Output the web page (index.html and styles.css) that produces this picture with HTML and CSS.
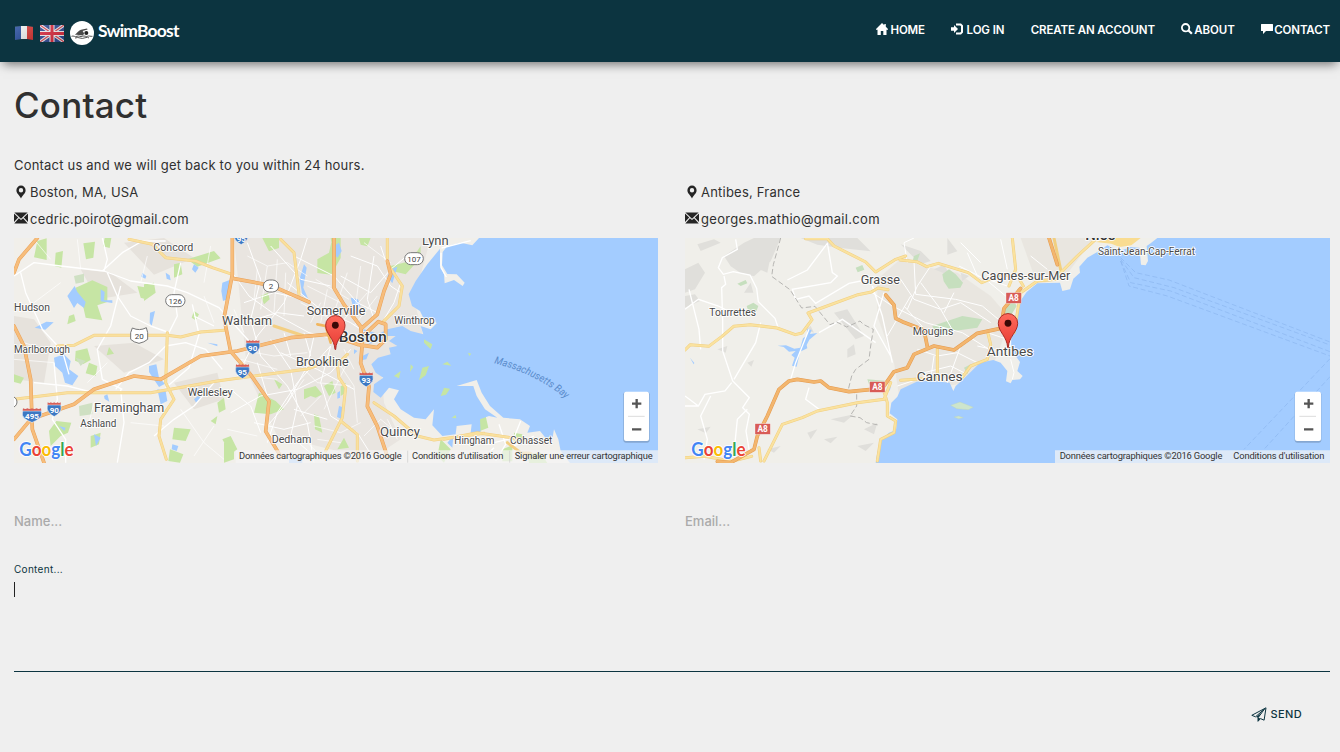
FILE: index.html
```html
<!DOCTYPE html>
<html lang="en">
<head>
<meta charset="utf-8">
<title>SwimBoost - Contact</title>
<link rel="stylesheet" href="styles.css">
</head>
<body>
<svg class="defs" width="0" height="0">
  <defs>
    <linearGradient id="pinfill" x1="0" y1="0" x2="0" y2="1"><stop offset="0" stop-color="#ff6a5c"/><stop offset="1" stop-color="#e63b33"/></linearGradient>
    <linearGradient id="shine" x1="0" y1="0" x2="1" y2="1"><stop offset="0" stop-color="#fff" stop-opacity=".15"/><stop offset="1" stop-color="#000" stop-opacity=".15"/></linearGradient>
    <symbol id="pin" viewBox="0 0 64 108" overflow="visible"><path d="M31 106C29 72 2 58 2 31a30 30 0 0 1 60 0C62 58 34 72 33 106z" fill="url(#pinfill)" stroke="#a52a24" stroke-width="3"/><circle cx="32" cy="31" r="10.500" fill="#3a0906"/></symbol>
    <symbol id="marker" viewBox="0 0 14 14"><path fill-rule="evenodd" d="M7 .6A4.600 4.600 0 0 0 2.400 5.200C2.400 8.500 5.500 10 7 13.500 8.500 10 11.600 8.500 11.600 5.200A4.600 4.600 0 0 0 7 .6zm0 2.400a2.200 2.200 0 1 1 0 4.400 2.200 2.200 0 0 1 0-4.400z"/></symbol>
    <symbol id="mail" viewBox="0 0 14 12"><path d="M.4.500h13.200L7 6.800zM0 1.500l4.200 4L0 10zM14 1.500l-4.200 4L14 10zM4.900 6.200 7 8.100l2.100-1.900 4.600 5.300H.300z"/></symbol>
    <symbol id="shield" viewBox="0 0 60 60" preserveAspectRatio="none" overflow="visible"><path d="M2 12Q-3 30 8 42 18 52 30 58 42 52 52 42 63 30 58 12z" fill="#3c78c3" stroke="#fff" stroke-width="2"/><path d="M3 1q7 5 13 0 7 5 14 0 7 5 14 0 6 5 13 0l1 10H2z" fill="#d65f59"/></symbol>
    <g id="google" font-family="Lato,sans-serif" font-size="55" font-weight="700" stroke="#fff" stroke-width="5" paint-order="stroke"><text textLength="163" lengthAdjust="spacingAndGlyphs"><tspan fill="#4285f4">G</tspan><tspan fill="#ea4335">o</tspan><tspan fill="#fbbc05">o</tspan><tspan fill="#4285f4">g</tspan><tspan fill="#34a853">l</tspan><tspan fill="#ea4335">e</tspan></text></g>
  </defs>
</svg>

<header class="navbar">
  <div class="brand">
    <svg class="flag-fr" viewBox="0 0 18 14"><path fill="#2a50a0" d="M0 1l6-1v13l-6 1z"/><path fill="#f5f5f5" d="M6 0h6v13H6z"/><path fill="#dd3c3a" d="M12 0l6 1v13l-6-1z"/><path fill="url(#shine)" d="M0 0h18v14H0z"/></svg>
    <svg class="flag-uk" viewBox="0 0 24 17"><path fill="#2c4690" d="M0 0h24v17H0z"/><path stroke="#eee" stroke-width="3.200" d="M0 0l24 17M24 0L0 17"/><path stroke="#d44350" stroke-width="1.200" d="M0 0l24 17M24 0L0 17"/><path stroke="#f3eeee" stroke-width="5" d="M12 0v17M0 8.500h24"/><path stroke="#d8293c" stroke-width="3" d="M12 0v17M0 8.500h24"/><path fill="url(#shine)" d="M0 0h24v17H0z"/></svg>
    <svg class="logo" viewBox="0 0 24 24"><circle cx="12" cy="12" r="12" fill="#fff"/><path d="M5 13.800c2-2 4-4.500 6-5l6-1.300.6 1-5 1.500 1.500 2.200-1 2.300c-3-.5-5.500-.2-8.100-.7z" fill="#4a4a4a"/><circle cx="16.300" cy="12" r="2" fill="#222"/><path d="M1.500 15.300c2-1 3.500 1 5.500 0s3.500 1 5.500 0 3.500.8 5 0 3 .3 5 0M5 17q3-1 5 0t5-.2 4 .2" fill="none" stroke="#555" stroke-width="1"/></svg>
    <span class="brand-name">SwimBoost</span>
  </div>
  <nav class="menu">
    <a class="home"><svg viewBox="0 0 12 12"><path d="M6 0l2.300 2.300V1h1.500v2.800L12 6.100v.6h-1.500V12H7.300V8H4.800v4H1.500V6.700H0v-.6z"/></svg><span>HOME</span></a>
    <a class="login"><svg viewBox="0 0 12 12"><path d="M0 4.200h3V2l4 4-4 4V7.800H0zM5 .6h5L12 2.500v7L10 11.400H5V9.600h4.200l.8-.8V3.200l-.8-.8H5z"/></svg><span>LOG IN</span></a>
    <a class="create"><span>CREATE AN ACCOUNT</span></a>
    <a class="about"><svg viewBox="0 0 12 12"><circle cx="4.600" cy="4.700" r="3.700" fill="none" stroke="#fff" stroke-width="1.800"/><path d="M7.300 7.300l3.600 3.500" stroke="#fff" stroke-width="2.300"/></svg><span>ABOUT</span></a>
    <a class="contact"><svg viewBox="0 0 12 12"><path d="M.5 1h11q.5 0 .5.500v6q0 .5-.5.500H5l-3 3V8H.5Q0 8 0 7.500v-6Q0 1 .5 1z"/></svg><span>CONTACT</span></a>
  </nav>
</header>

<main class="page">
  <h1><span>Contact</span></h1>
  <p class="intro"><span>Contact us and we will get back to you within 24 hours.</span></p>
  <div class="columns">
    <section>
      <p class="line"><svg><use href="#marker"/></svg><span>Boston, MA, USA</span></p>
      <p class="line"><svg class="mail"><use href="#mail"/></svg><span>cedric.poirot@gmail.com</span></p>
      <svg class="map" viewBox="0 6 1932 675" preserveAspectRatio="none">
        <rect y="6" width="1932" height="675" fill="#f1efea"/>
        <g fill="#e6e2dc"><path d="M0 240l60 10 50 70-20 120-90-10zM200 100l90 10 80 60-120 20zM240 330l120-10 90 50-120 40zM330 20l120-14 90 60-120 50zM480 440l130-30 20 80-90 30z"/><path d="M660 6h590L1200 190l30 120-130 70 10 120 50 110-90 60-160-40-120-30-90-190z" opacity=".75"/></g>
        <g fill="#c6e5a4"><path d="M70 15l28-8v65l-38-8zM125 50l22-5-5 50-20-5zM208 22l35-5-5 48-22 5zM272 6h20l-5 30-20-5zM185 155l50-22 45 20v45l-30 10 15 45-50-8-10-45-22-30zM370 150l30 5-5 35-15-5zM390 145l30-5 5 30-35 25zM480 85l20-5 5 35-25 10zM520 70l80-25 20 22-70 25zM540 225l15 10-10 18-12-8zM185 345l35-8 10 35-22 12-25-10zM225 380l25 10-5 30-30-8zM285 333l15 20-22 5zM0 415l30 10-10 18-20-5zM165 240l15-5 5 20-25 10zM105 585l22-30 45 5-10 30-22 10-30 30zM230 600l30-10-5 35-25 10zM480 575l50 5-15 35-40-5zM468 640l40 15-10 25-35-5zM610 500l20-15 5 35-20 10zM625 610l25-10 20 40-20 15zM590 555l20-15-5 25z"/><path d="M745 6h50v30l-30 10zM910 70l35-20 10-44h25v60l-28 50-42-5zM950 6h20l-15 30zM740 180l22-10 5 20-17 15zM1130 90l60-15 30-45v35l-45 50-40-10zM735 470l50 25 25 25-40 15-50-5zM780 430l25 15-10 15zM870 460l35-10 20 25-20 10-15-5-20 10zM930 450l25-15 10 35-20 10zM970 640l20-35 15 30zM630 620l30 5v45l-30 10zM900 535l15 5 10 50-22-10zM980 450l15-10v30l-15 10zM1035 6h35l-10 25-20-5z"/><path d="M1395 530l20 10 8 35-25 10-12-40zM1465 640l30-12v48h-30zM1540 655l40-5 20 31h-55zM1500 590l25 5v20h-25zM1280 610l30 30-20 40-20-20z"/></g>
        <g fill="#cfe0c3"><path d="M180 120l30-7v25l-25 5zM195 510l40-10v35l-38 5zM185 365l30 10-15 15z"/></g>
        <path fill="#a3ccff" d="M1395 6L1375 28 1340 20 1300 30 1286 48 1284 88 1300 114 1328 115 1352 140 1346 150 1320 132 1292 142 1290 115 1278 88V38L1240 85 1205 135 1184 175 1194 210 1218 225 1230 250 1255 245 1268 262 1250 280 1220 270 1228 295 1190 285 1165 270 1120 280 1110 300 1145 300 1125 315 1150 330 1125 335 1130 355 1092 365 1072 385 1085 410 1108 425 1080 445 1078 468 1100 485 1125 455 1155 463 1140 490 1160 520 1200 545 1235 550 1260 520 1255 568 1285 600 1325 595 1328 570 1373 565 1370 590 1400 595 1398 550 1425 540 1450 545 1413 520 1388 480 1378 450 1328 450 1388 432 1403 470 1428 510 1468 545 1518 550 1548 570 1540 590 1578 585 1598 610 1613 620 1620 580 1633 610 1640 645 1668 681H1932V6z"/>
        <g fill="#a3ccff"><path d="M160 180l22-30 8 18 25 30-5 18-20-15-10 15zM260 160l12 8-2 25h25v8l-35-5zM62 275l35-18 22 2-25 22zM120 365l30-10 20 20-5 25 28 20-18 28-22-8-8-30-22-20zM405 390l22-5 8 40 18 18-18 10-30-45zM430 460l25 5 5 30-20 10zM455 110l12 8 3 15-12-5zM385 110l12 10-3 8-12-6zM540 85l14 10-10 15-10-10zM625 140l22-8v55l-20 8-5-30zM408 230l15-5-10 45-6-10zM580 320l30 5v6zM540 490l14-12 8 8-15 15zM270 480l10-5 6 22-14-8zM475 625l18 5-5 15-15-5zM240 595l20 10-14 25zM135 570l20 5-4 10z"/><path d="M960 30l15-10 8 25-12 20-13-12zM870 85l8 10-10 60 15 35-18-12-8-50zM1010 185l22 5 8 22-25-8zM1130 100l20-8-15 50-15-20zM1050 280l32 10-15 18 45-24-5 25-40 15-35-30zM1045 360l20-10-8 20-15 3zM975 510l10 3-4 35-12-5zM630 155l12 20-4 20-8-5zM1020 340l10 5-10 10zM970 470l8-5v20l-8 3zM825 670l40-7v18h-40zM1300 620l18-20-3 35z"/></g>
        <g fill="#c6e5a4"><path d="M1230 310l25 15-5 15-20-20zM1190 385l8 8-10 15zM1225 395l20-5-10 28-20 15zM1140 420l20-15-5 22zM1280 480l10-25 18 3-12 18zM1285 385l15-8 12 12zM1362 350l10 3-6 7zM1313 545l12-8 2 10z"/></g>
        <g fill="none" stroke="#fff" stroke-width="4" stroke-linejoin="round">
          <path d="M0 120l60-40 80 10 130 15 80 30 110 15 60 20 95 45 90 100M270 105l10-35-15-65M265 105l60-55 60-35h70M280 110l30 70 40 60 60 30 50 18M20 110l15 60 50 110 60 65 20 70M60 440l100 10 80 20M320 150l-30 120-40 70 15 90 60 30M120 380l10 110-15 60 40 60v70M305 460l40-50 60-30 50-50 60-10 60 20 50 60M455 455l70-60 30-100-20-90M500 80l-20 90 10 70-25 50M540 240l60 30M420 600l60-50 60-40 60-70M320 460l10 100-20 120"/>
          <path stroke-width="3" d="M655 110l50 70 70 50 110 60 80 20M670 420l60-120 80-100 50-130 20-64M700 20l40 110-30 120 30 110 80 90 60 110 20 120M650 530l90-50 110-20 100-50 60-70M760 620l30-90 60-90 100-110M820 140l100 80 90 40 60 40M840 60l120 60 70 80 60 30M980 120l90 50 60-70 60-50M770 310l60 90 20 110-20 90 70 60M900 300l-20 90-60 110-60 70M950 330l-30 110 30 100 80 50 50 80M1010 60l80 30 40 60 30 20M1160 140l-20 60-30 50M1080 60l-20 130 20 60M770 30l90 100 90 20M1100 30l30 90M690 200l90-30 90 20M690 260l100-30 80 10M800 350l110 50 110 60M650 460l60 50 30 80M720 560l90 20 80-20M840 520l100 30M810 290l20 70M870 290l20 70M730 380l30 100"/>
          <path stroke-width="2" d="M700 60l60 30 60-10 60 40M730 100l-10 90M760 90l-20 130M790 70l-10 160M815 110l-5 130M660 220l30 70M920 200l-30 60M940 160l-20 100M1000 110l-40 120M1040 90l-20 160M860 200l110 60M880 150l120 60M905 130l100 60M990 250l70-80M1020 270l70-90M1050 20l80 60M670 340l110 20 100-10M680 370l110 30M850 380l60 60 100 10M870 430l-50 70M920 480l-60 60M1000 380l-70 140M960 360l60 90 10 110M990 340l30 60M900 570l80 20 60-30M910 610l70 10M1050 600l50-50 60 50M1120 550l30 60M880 620l40 40M700 420l90 10M640 580l90 20M30 320l90 30M0 370l120 10M60 200l80-60M220 440l60-60M60 10l50 60M190 10l10 90M400 60l-20 80M590 30l-20 110M570 180l30 80M350 560l100 10M500 520l70 100 60 50M540 660l60-90M240 500l-20 80"/>
          <path d="M1455 565l20 60-30 50M1520 555l-20 50-80 20M1440 635l-30 30M1560 600l-60 30M1283 36l87-22M1281 50v45l16 28"/>
        </g>
        <g fill="none" stroke-linejoin="round" stroke-linecap="round">
          <path stroke="#f3cf83" stroke-width="9" d="M130 330l50-2 60-30h220l40 5 60-15 70-5M345 10l70 15 40 40 90 10 50 20 60 20M460 290l-5 150 25 50-40 60-5 50 22 70M0 490l160-20h250l200-35 270-36 70-25M800 10l40 40 10 80 5 45M1120 6v60M1125 90l40 60-10 60-50 50M1000 355l-30 30 5 40 20 30-10 90-50 100M980 555l50 40v80M1080 500l60 40 70 60 50 12 150-20M1290 610l100-20 200 30M780 270l90 30M1480 620l40 30 30 2"/>
          <path stroke="#f9e09e" stroke-width="6" d="M130 330l50-2 60-30h220l40 5 60-15 70-5M345 10l70 15 40 40 90 10 50 20 60 20M460 290l-5 150 25 50-40 60-5 50 22 70M0 490l160-20h250l200-35 270-36 70-25M800 10l40 40 10 80 5 45M1120 6v60M1125 90l40 60-10 60-50 50M1000 355l-30 30 5 40 20 30-10 90-50 100M980 555l50 40v80M1080 500l60 40 70 60 50 12 150-20M1290 610l100-20 200 30"/>
          <path stroke="#e8a15a" stroke-width="11" d="M70 6L15 70 0 110M0 270l30 60 20 100 5 150 35 100M0 610l50-60 130-45 60-45 120-40 80 10 120-70 110-15 160-40 110-10 90 30 60 10 25-25V265l-22-8-48 45M655 6v110l-25 130 20 100 60 70 55 80-10 90 45 75M660 128l110 20 115 50M960 6v150l30 50 50 65 5 50-5 60 25 70-5 60 30 60 30 90M1120 75l10 40-20 50-20 70-45 40"/>
          <path stroke="#f7bd7b" stroke-width="8" d="M70 6L15 70 0 110M0 270l30 60 20 100 5 150 35 100M0 610l50-60 130-45 60-45 120-40 80 10 120-70 110-15 160-40 110-10 90 30 60 10 25-25V265l-22-8-48 45M655 6v110l-25 130 20 100 60 70 55 80-10 90 45 75M660 128l110 20 115 50M960 6v150l30 50 50 65 5 50-5 60 25 70-5 60 30 60 30 90M1120 75l10 40-20 50-20 70-45 40"/>
          <path stroke="#f1b65f" stroke-width="8" d="M910 265l25 5 15 50"/>
        </g>
        <g class="place">
          <text x="418" y="45" textLength="120" lengthAdjust="spacingAndGlyphs">Concord</text><text x="0" y="226" textLength="108" lengthAdjust="spacingAndGlyphs">Hudson</text><text x="0" y="351" textLength="168" lengthAdjust="spacingAndGlyphs">Marlborough</text>
          <text x="240" y="528" textLength="211" lengthAdjust="spacingAndGlyphs" class="big">Framingham</text><text x="199" y="573" textLength="108" lengthAdjust="spacingAndGlyphs">Ashland</text><text x="521" y="479" textLength="135" lengthAdjust="spacingAndGlyphs">Wellesley</text>
          <text x="624" y="266" textLength="150" lengthAdjust="spacingAndGlyphs" class="big">Waltham</text><text x="878" y="238" textLength="176" lengthAdjust="spacingAndGlyphs" class="big">Somerville</text><text x="846" y="389" textLength="158" lengthAdjust="spacingAndGlyphs" class="big">Brookline</text>
          <text x="974" y="317" textLength="144" lengthAdjust="spacingAndGlyphs" class="city">Boston</text><text x="1141" y="264" textLength="121" lengthAdjust="spacingAndGlyphs">Winthrop</text><text x="773" y="620" textLength="119" lengthAdjust="spacingAndGlyphs">Dedham</text><text x="1098" y="600" textLength="120" lengthAdjust="spacingAndGlyphs" class="big">Quincy</text><text x="1224" y="27" textLength="80" lengthAdjust="spacingAndGlyphs" class="big">Lynn</text><text x="1321" y="625" textLength="120" lengthAdjust="spacingAndGlyphs">Hingham</text><text x="1488" y="625" textLength="127" lengthAdjust="spacingAndGlyphs">Cohasset</text>
        </g>
        <g class="badge">
          <rect x="455" y="176" width="58" height="36" rx="18"/><text x="484" y="203">126</text><rect x="748" y="132" width="46" height="36" rx="18"/><text x="771" y="159">2</text><rect x="1172" y="50" width="56" height="36" rx="18"/><text x="1200" y="77">107</text>
          <path d="M355 276q22 10 42-1l4 15v20q-10 9-26 12-16-3-25-12v-20z"/><text x="376" y="308">20</text><circle cx="-8" cy="498" r="17"/>
        </g>
        <g class="shield"><use href="#shield" x="24" y="516" width="60" height="45"/><text x="54" y="550">495</text><use href="#shield" x="99" y="498" width="43" height="45"/><text x="121" y="531">90</text><use href="#shield" x="695" y="312" width="43" height="45"/><text x="716" y="345">90</text><use href="#shield" x="664" y="384" width="43" height="45"/><text x="685" y="417">95</text><use href="#shield" x="1035" y="409" width="43" height="45"/><text x="1056" y="442">93</text><use href="#shield" x="660" y="-18" width="43" height="45"/><text x="682" y="19">95</text></g>
        <path id="bay" d="M1440 382Q1570 414 1662 494" fill="none"/><text class="bay"><textPath href="#bay" textLength="242" lengthAdjust="spacingAndGlyphs">Massachusetts Bay</textPath></text>
        <use href="#pin" x="933" y="237" width="62" height="106"/>
        <use href="#google" x="16" y="661"/>
        <path d="M665 643h1267v38H665z" fill="#f5f5f5" opacity=".7"/><path d="M1181 644v36M1487 644v36" stroke="#ccc" stroke-width="2"/>
        <g class="credit"><text x="675" y="668" textLength="488">Données cartographiques ©2016 Google</text><text x="1194" y="668" textLength="274">Conditions d'utilisation</text><text x="1502" y="668" textLength="414">Signaler une erreur cartographique</text></g>
        <g class="zoomer"><rect class="halo" x="1828" y="468" width="79" height="152" rx="7"/><rect x="1830" y="467" width="75" height="148" rx="6"/><path class="rule" d="M1842 541h50"/><path d="M1854 503h28M1868 489v28M1854 580h28"/></g>
      </svg>
    </section>
    <section>
      <p class="line"><svg><use href="#marker"/></svg><span>Antibes, France</span></p>
      <p class="line"><svg class="mail"><use href="#mail"/></svg><span class="mail-b">georges.mathio@gmail.com</span></p>
      <svg class="map" viewBox="3 6 1935 675" preserveAspectRatio="none">
        <rect width="1940" height="690" fill="#f0efea"/>
        <g fill="#e7e3dd"><path d="M580 130l80-70 50 30 110 20 100 70 60 70-50 130-120 60-100 10-60 60-20-130-50-140zM660 450l60-50 110-20 60 20-40 40-60 10-90 10zM1010 6h220l-90 120-80 20z" opacity=".8"/></g>
        <g fill="#e0dfdb"><path d="M3 100l40-20 20 30-30 50-30 10zM40 25l50-15 20 10-60 25zM120 60l60-40 30-14h80l-30 70-50 45-40-10-30-20zM200 90l60-30-10 50zM350 6h170l40 40-90-10-70-10zM3 180l30-5 15 20-45 20zM180 170l20-30 8 30zM370 590l30-10-20 30zM440 550l70-15-30 25zM540 580l40-20-10 35zM450 230l40-10 50 80-25 10zM490 340l20-15 5 30-25 10zM40 580l40-8-15 20zM100 340l30-10-5 20zM250 640l40-10-20 20zM520 630l50-10-25 25zM420 610l40-8-20 20zM190 380l20-8-8 20zM360 280l20-10 10 20z"/><path d="M650 25l60 20 30 30-30 10zM750 100l30-14 20 34zM790 6l30 40-30 10zM830 110l25 10-20 15z"/></g>
        <g fill="#c6dfbe"><path d="M160 143l25-11 5 10-20 8zM188 210l20-10 15 10-6 16-22 5zM515 95l20-8 6 14-20 8zM690 60l18-8-10 28-12-5zM775 115l20-15 20 15 22 25-8 15-35 3-15-22zM745 270l90-30 60 10-15 25-70 10-50 20zM960 215l30-20 8 15-15 25-20 5zM550 430l60 5-15 20-40-10zM840 395l20-10-10 30z"/></g>
        <path fill="#a3ccff" d="M1420 6L1400 22 1388 30 1392 75 1385 88 1371 86 1366 35 1340 33 1308 45 1270 28 1240 48 1210 65 1186 92 1188 110 1168 128 1158 160 1135 165 1128 140 1060 142 1028 168 1005 200 995 240 986 290 978 325 988 350 1008 378 1000 405 1016 420 1008 430 985 432 980 442 966 436 970 405 950 380 928 372 888 380 860 408 835 433 815 450 808 465 797 440 740 434 698 437 650 460 L640 482 622 500 617 532 640 550 636 582 615 590 592 612 580 650 575 681H1938V6z"/>
        <path fill="#cde5cc" stroke="#bcd0b6" stroke-width="1" d="M800 508l28-10 40 16-15 7-35-3zM810 543l14-3 14 5-14 3z"/>
        <path fill="#a3ccff" d="M370 278l13 4-5 12 22-3-24 20-8 16 2 10-22 10-10 45-14-3 8-24-10-8 13-12-20 2-16-14-18-4 25-1 25 10 18-3 8-28 12-8zM18 365l13 16-2 4zM609 453l12-3-4 15z"/>
        <g fill="none" stroke="#fff" stroke-width="4"><path d="M155 10l5 30-45 25-12 30 15 20 30-8 50 10 20 40 5 40 50 50 10 30M120 120l5 25-12 10 3 100v90l30 90 50 50-20 30 20 20-10 50 10 60M3 220l40-30 60 20 30 15 80 10M15 160l30 120 5 60M430 20l15 90 15 10-20 20-115 20 10 30 40-10 20 22 100-60 50-10M430 22l-60 80-60 30M565 150l30 90 30 140M600 170l-30 100 50 90M230 260l-15 60-65 110M375 280l-40 100-15 50M375 455l-10 35 40 30M3 510h40l20-35 60-10 20-25M80 480l-30 60 20 70-10 60M190 520l-30 30-10 100M3 480l40 30M405 290l70-40 100 70"/><path stroke-width="3" d="M565 170l60 40 100 50 110 30 80 50M650 130l40 60 80 30 40 70M690 75l5 100 120 15 80 20 60 50M710 140l60 80 60-20 90 60M660 210l80 90 60-5M740 90l-40 60-30 70M825 90l80 40 60 50M850 50l30 70 60 20 30 10M670 80l-10-60 30-14M830 20l60 60M950 10l20 90M1040 60l50 40M700 340l60 20 60-10 60 30M720 410l80-20 40 20M750 360l-10 70M830 330l-40 110M640 450l90-30 50 10 40-10M950 240l30 60 0 40M910 290l60 20M880 330l90 20M980 370l10 40-5 20M680 180l-70 120M810 170l-30 60"/></g>
        <path d="M290 6l-22 80-5 35 55 40 35 55 40-5 45 55 20-8 30 15 40-18 10 10 30 15-8 50-5 40-40 30-12 20-10 40 25 15 0 35-20 30 30 5 20 15 40 8" fill="none" stroke="#b6b5b2" stroke-width="3" stroke-dasharray="16 8"/>
        <g fill="none" stroke-linejoin="round" stroke-linecap="round">
          <path stroke="#f1cf80" stroke-width="9" d="M365 8h65l20 22 95 48 30 30 60-38 30-10M3 342l16-16 55 5 40-30 35-30 50-5 80 10 55 20 20-5 30-40-12-20 150-55 40-8 20-12 30 5M648 72l50 5 30 15 35-10 90 28 40 30 60-25 50 10 15 25M975 150l20-50-10-94M1110 6l20 95M990 290l10-60 10-60 50-35 60-5M910 285l10 40-10 45-50 20-30 40M620 440l-20 50-80 10-120 25-45 20-60 20-30 60-25 50M595 450l15 50 0 40 25 15-5 35-40 20-10 65M760 340v85l-110 8M225 635l5 40M3 665l60-4 80 15 60-15M1120 120l60-60 55-50"/>
          <path stroke="#fae29f" stroke-width="6" d="M365 8h65l20 22 95 48 30 30 60-38 30-10M3 342l16-16 55 5 40-30 35-30 50-5 80 10 55 20 20-5 30-40-12-20 150-55 40-8 20-12 30 5M648 72l50 5 30 15 35-10 90 28 40 30 60-25 50 10 15 25M975 150l20-50-10-94M990 290l10-60 10-60 50-35 60-5M910 285l10 40-10 45-50 20-30 40M620 440l-20 50-80 10-120 25-45 20-60 20-30 60-25 50M595 450l15 50 0 40 25 15-5 35-40 20-10 65M760 340v85l-110 8M225 635l5 40M3 665l60-4 80 15 60-15M1120 120l60-60 55-50"/>
          <path stroke="#e49b50" stroke-width="11" d="M100 676l40 4 70-40 10-40 30-60 35-80 30-25 25-5 50 8 20-3 25 20 60 12 100-10 35-50 40-12 20-40 60-25 60 12 70-50 70-15 10-60 50-60M605 177l25 30 5 40 20 10 65 25 10 50M1095 6l25 80"/>
          <path stroke="#f3b66e" stroke-width="8" d="M100 676l40 4 70-40 10-40 30-60 35-80 30-25 25-5 50 8 20-3 25 20 60 12 100-10 35-50 40-12 20-40 60-25 60 12 70-50 70-15 10-60 50-60M605 177l25 30 5 40 20 10 65 25 10 50M1095 6l25 80"/>
        </g>
        <path fill="none" stroke="#8bb5ee" stroke-width="2" stroke-dasharray="15 8" d="M1310 65l45 45 100 22 483 186M1310 70l40 55 120 30 468 172M1310 75l30 65 120 25 478 182M1310 75l25 75 115 30 488 180M1938 368L1680 640M1938 422L1740 640"/>
        <g fill="#f9dc91"><path d="M1235 18l45-12 90 0-28 22-35 5-25-10z"/></g>
        <g class="place">
          <text x="530" y="143" textLength="118" lengthAdjust="spacingAndGlyphs" class="big">Grasse</text><text x="76" y="240" textLength="140" lengthAdjust="spacingAndGlyphs">Tourrettes</text><text x="892" y="131" textLength="267" lengthAdjust="spacingAndGlyphs" class="big">Cagnes-sur-Mer</text><text x="1242" y="58" textLength="291" lengthAdjust="spacingAndGlyphs">Saint-Jean-Cap-Ferrat</text><text x="686" y="296" textLength="122" lengthAdjust="spacingAndGlyphs">Mougins</text><text x="908" y="360" textLength="140" lengthAdjust="spacingAndGlyphs" class="big">Antibes</text><text x="698" y="434" textLength="138" lengthAdjust="spacingAndGlyphs" class="big">Cannes</text><text x="1204" y="12" textLength="90" lengthAdjust="spacingAndGlyphs" class="city">Nice</text>
        </g>
        <g class="autoroute"><rect x="557" y="437" width="46" height="32"/><text x="580" y="462">A8</text><rect x="213" y="563" width="46" height="32"/><text x="236" y="588">A8</text><rect x="966" y="170" width="46" height="32"/><text x="989" y="195">A8</text></g>
        <use href="#pin" x="941" y="231" width="62" height="106"/>
        <use href="#google" x="22" y="661"/>
        <path d="M1113 643h825v38h-825z" fill="#f5f5f5" opacity=".7"/>
        <g class="credit"><text x="1127" y="668" textLength="488">Données cartographiques ©2016 Google</text><text x="1648" y="668" textLength="273">Conditions d'utilisation</text></g>
        <g class="zoomer"><rect class="halo" x="1832" y="468" width="80" height="152" rx="7"/><rect x="1833" y="467" width="78" height="148" rx="6"/><path class="rule" d="M1846 541h50"/><path d="M1860 503h28M1874 489v28M1860 580h28"/></g>
      </svg>
    </section>
  </div>
  <form>
    <div class="columns fields"><label>Name...</label><label>Email...</label></div>
    <label class="content-label"><span>Content...</span></label>
    <div class="content-box"><i class="caret"></i></div>
    <div class="actions"><svg viewBox="0 0 16 15"><path d="M15 .8L.8 8.300l3.700 1.500L13.500 2 7 10.800v3.500l2.500-2.700 3.600 1.600z" fill="none" stroke="#0c3440" stroke-width="1" stroke-linejoin="round"/><path d="M7 10.800l2.500.8L7 14.300zM11 5.500L5 10l2 .8z" fill="#0c3440"/></svg><span>SEND</span></div>
  </form>
</main>
</body>
</html>
```
FILE: styles.css
```css
* { box-sizing: border-box; }
body { margin: 0; height: 752px; overflow: hidden; background: #efefef; color: #303030; font-family: Inter, sans-serif; font-size: 13px; }
p, h1 { margin: 0; }
.defs { position: absolute; }
.navbar { display: flex; justify-content: space-between; height: 62px; padding: 0 10px 0 15px; background: #0c3440; box-shadow: 0 5px 10px -3px rgba(0,0,0,.55); color: #fff; }
.brand { display: flex; align-items: center; height: 62px; padding-top: 4px; }
.flag-fr { width: 18px; height: 14px; margin-right: 7px; }
.flag-uk { width: 24px; height: 17px; margin-right: 6px; }
.logo { width: 24px; height: 24px; margin-right: 4px; }
.brand-name { margin-top: -4px; font: 700 17.500px/22px Lato, sans-serif; letter-spacing: -.82px; }
.menu { display: flex; height: 60px; align-items: center; font-size: 11.500px; font-weight: 600; }
.menu a { display: flex; align-items: center; justify-content: space-between; margin-left: 26.400px; white-space: nowrap; }
.menu svg { width: 12px; height: 12px; margin-top: -3px; fill: #fff; }
.home { width: 49px; }
.login { width: 53px; }
.create { width: 123.500px; }
.about { width: 54px; }
.contact { width: 69px; }
.menu span { letter-spacing: -.12px; }
.page { padding: 21px 10px 0 14px; }
h1 { height: 44px; font-size: 35px; line-height: 44px; font-weight: 450; }
h1 span { letter-spacing: .2px; }
.intro { margin-top: 25px; height: 26px; line-height: 27px; letter-spacing: .2px; }
.columns { display: grid; grid-template-columns: 644px 645px; column-gap: 27px; }
.line { display: flex; align-items: center; height: 27px; gap: 2px; letter-spacing: .22px; }
.line svg { width: 14px; height: 14px; fill: #252525; }
.line .mail { height: 12px; margin-top: -2px; }
.mail-b { letter-spacing: .3px; }
.map { display: block; width: 100%; height: 225px; margin-top: 6px; }
.map text { font-family: Roboto, sans-serif; }
.place text { font-size: 32px; fill: #494949; stroke: #fff; stroke-width: 5px; paint-order: stroke; }
.place .big { font-size: 38px; }
.place .city { font-size: 44px; font-weight: 500; fill: #333; }
.badge rect, .badge path, .badge circle { fill: #fff; stroke: #777; stroke-width: 3px; }
.badge text { font-size: 24px; fill: #444; text-anchor: middle; }
.shield text { font-size: 24px; font-weight: 700; fill: #fff; text-anchor: middle; }
.map .bay { font-size: 31px; font-style: italic; fill: #5a8bcb; }
.credit text { font-size: 28px; fill: #333; }
.autoroute rect { fill: #d85c57; stroke: #fff; stroke-width: 1px; }
.autoroute text { font-size: 25px; font-weight: 700; fill: #fff; text-anchor: middle; }
.zoomer rect { fill: #fff; }
.zoomer .halo { fill: #000; opacity: .18; }
.zoomer path { stroke: #555; stroke-width: 7px; }
.zoomer .rule { stroke: #ddd; stroke-width: 3px; }
.fields { margin-top: 48px; height: 20px; line-height: 20px; color: #aaa; font-weight: 500; }
.content-label { display: block; margin-top: 31px; font-size: 10px; line-height: 14px; letter-spacing: .3px; color: #0c3440; }
.content-box { height: 96px; padding-top: 6px; border-bottom: 1px solid #0c3440; }
.caret { display: block; width: 1px; height: 15px; background: #222; }
.actions { display: flex; align-items: center; justify-content: flex-end; gap: 3px; height: 28px; margin-top: 28px; padding-right: 28px; font-size: 11px; font-weight: 500; letter-spacing: .4px; color: #0c3440; }
.actions svg { width: 16px; height: 15px; }
```
